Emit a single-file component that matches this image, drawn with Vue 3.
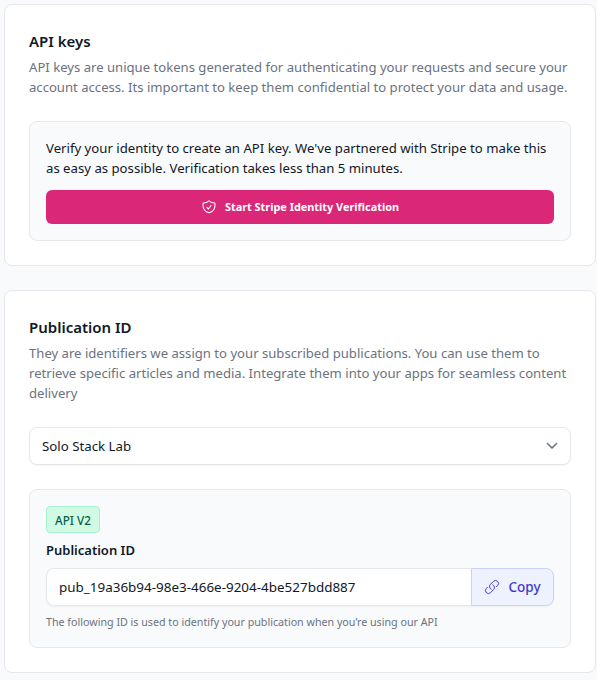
<script setup>
const publicationId = 'pub_19a36b94-98e3-466e-9204-4be527bdd887'
</script>

<template>
  <main class="page">
    <section class="card">
      <h2 class="title">API keys</h2>
      <p class="desc">API keys are unique tokens generated for authenticating your requests and secure your account access. Its important to keep them confidential to protect your data and usage.</p>
      <div class="panel verify">
        <p class="verify-text">Verify your identity to create an API key. We've partnered with Stripe to make this as easy as possible. Verification takes less than 5 minutes.</p>
        <button class="primary" type="button">
          <svg class="shield" viewBox="0 0 24 24" fill="none" stroke="currentColor" stroke-width="1.6" stroke-linecap="round" stroke-linejoin="round">
            <path d="M9 12.75 11.25 15 15 9.75" />
            <path d="M12 2.7a11.96 11.96 0 0 1-8.6 3.3A12 12 0 0 0 3 9c0 5.6 3.8 10.3 9 11.6 5.2-1.3 9-6 9-11.6a12 12 0 0 0-.4-3A11.96 11.96 0 0 1 12 2.7Z" />
          </svg>
          <span>Start Stripe Identity Verification</span>
        </button>
      </div>
    </section>

    <section class="card">
      <h2 class="title">Publication ID</h2>
      <p class="desc">They are identifiers we assign to your subscribed publications. You can use them to retrieve specific articles and media. Integrate them into your apps for seamless content delivery</p>
      <div class="select">
        <span>Solo Stack Lab</span>
        <svg class="chevron" viewBox="0 0 20 20" fill="none" stroke="currentColor" stroke-width="1.6" stroke-linecap="round" stroke-linejoin="round">
          <path d="M5.5 7.5 10 12l4.5-4.5" />
        </svg>
      </div>
      <div class="panel details">
        <span class="badge">API V2</span>
        <label class="label">Publication ID</label>
        <div class="copy-row">
          <div class="id-field">{{ publicationId }}</div>
          <button class="copy" type="button">
            <svg class="link" viewBox="0 0 24 24" fill="none" stroke="currentColor" stroke-width="1.5" stroke-linecap="round" stroke-linejoin="round">
              <path d="M13.19 8.688a4.5 4.5 0 0 1 1.242 7.244l-4.5 4.5a4.5 4.5 0 0 1-6.364-6.364l1.757-1.757m13.35-.622 1.757-1.757a4.5 4.5 0 0 0-6.364-6.364l-4.5 4.5a4.5 4.5 0 0 0 1.242 7.244" />
            </svg>
            <span>Copy</span>
          </button>
        </div>
        <p class="help">The following ID is used to identify your publication when you’re using our API</p>
      </div>
    </section>
  </main>
</template>

<style>
html, body { margin: 0; background: #f9fafb; }
</style>

<style scoped>
.page {
  box-sizing: border-box;
  width: 597px;
  height: 680px;
  overflow: hidden;
  padding: 4px 1px 0 4px;
  display: flex;
  flex-direction: column;
  gap: 24px;
  font-family: "Noto Sans", "Open Sans", sans-serif;
  font-size: 13.12px;
  line-height: 20px;
  color: #111827;
  background: #f9fafb;
}
.card {
  background: #fff;
  border: 1px solid #e5e7eb;
  border-radius: 8px;
  padding: 24px;
}
.title {
  margin: 0;
  font-size: 15px;
  line-height: 24px;
  font-weight: 600;
  color: #111827;
}
.desc {
  margin: 4px 0 0;
  color: #6b7280;
}
.panel {
  background: #f9fafb;
  border: 1px solid #e5e7eb;
  border-radius: 8px;
  padding: 16px;
  margin-top: 24px;
}
.details { padding-bottom: 17px; }
.verify-text { margin: 0; font-size: 13.18px; color: #111827; }
.primary {
  width: 100%;
  height: 34px;
  margin-top: 12px;
  border: 0;
  border-radius: 6px;
  background: #db2777;
  color: #fff;
  display: flex;
  align-items: center;
  justify-content: center;
  gap: 8px;
  font: 700 10.9px/16px "Noto Sans", "Open Sans", sans-serif;
  padding: 0;
}
.shield { width: 16px; height: 16px; }
.select {
  box-sizing: border-box;
  height: 38px;
  margin-top: 24px;
  padding: 0 12px;
  display: flex;
  align-items: center;
  justify-content: space-between;
  background: #fff;
  border: 1px solid #e5e7eb;
  border-radius: 8px;
  box-shadow: 0 1px 2px rgba(0, 0, 0, 0.05);
  font-size: 13.25px;
}
.chevron { width: 20px; height: 20px; color: #6b7280; margin-right: -4px; }
.badge {
  box-sizing: border-box;
  display: inline-flex;
  align-items: center;
  height: 27px;
  padding: 0 8px;
  background: #d1fae5;
  border: 1px solid #a7f3d0;
  border-radius: 4px;
  font-size: 11.7px;
  font-weight: 500;
  color: #065f46;
  vertical-align: top;
}
.label {
  display: block;
  margin-top: 7px;
  font-size: 13px;
  font-weight: 600;
  color: #111827;
}
.copy-row {
  display: flex;
  height: 38px;
  margin-top: 8px;
  border-radius: 8px;
  box-shadow: 0 1px 2px rgba(0, 0, 0, 0.05);
}
.id-field {
  box-sizing: border-box;
  flex: 1;
  display: flex;
  align-items: center;
  padding: 0 12px;
  background: #fff;
  border: 1px solid #e5e7eb;
  border-right: 0;
  border-radius: 8px 0 0 8px;
  font-size: 13.45px;
}
.copy {
  box-sizing: border-box;
  width: 83px;
  display: flex;
  align-items: center;
  justify-content: center;
  gap: 8px;
  padding: 0;
  background: #eef2ff;
  border: 1px solid #c7d2fe;
  border-radius: 0 8px 8px 0;
  color: #4338ca;
  font: 500 13.5px/20px "Noto Sans", "Open Sans", sans-serif;
}
.link { width: 16px; height: 16px; }
.help {
  margin: 8px 0 0;
  font-size: 10.7px;
  line-height: 16px;
  color: #6b7280;
}
</style>
